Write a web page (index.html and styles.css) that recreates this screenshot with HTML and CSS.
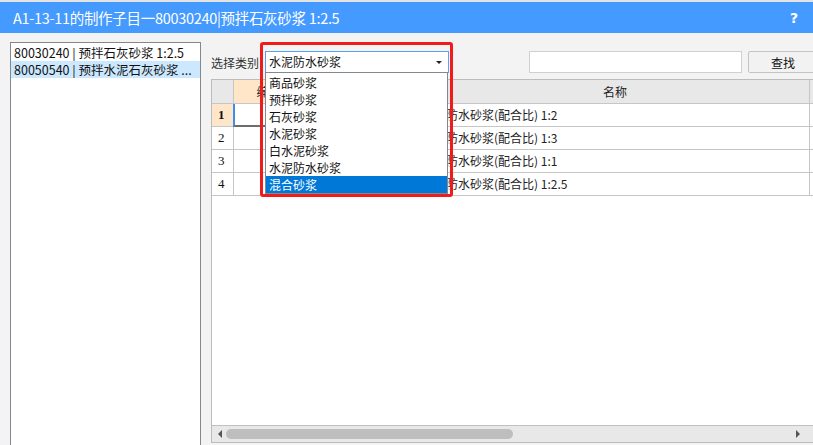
FILE: index.html
```html
<!DOCTYPE html>
<html>
<head>
  <meta charset="utf-8">
  <link rel="stylesheet" href="styles.css">
</head>
<body>
  <div class="topstrip"></div>
  <div class="titlebar">
    <span class="title">A1-13-11的制作子目一80030240|预拌石灰砂浆 1:2.5</span>
    <span class="help">?</span>
  </div>

  <div class="main">
    <div class="list">
      <div class="list-item">80030240 | 预拌石灰砂浆 1:2.5</div>
      <div class="list-item selected">80050540 | 预拌水泥石灰砂浆 ...</div>
    </div>

    <div class="panel">
      <div class="toolbar">
        <span class="label">选择类别</span>
        <div class="combo-wrap">
          <div class="combo">水泥防水砂浆<span class="arrow"></span></div>
          <div class="dropdown">
            <div class="dd-item">商品砂浆</div>
            <div class="dd-item">预拌砂浆</div>
            <div class="dd-item">石灰砂浆</div>
            <div class="dd-item">水泥砂浆</div>
            <div class="dd-item">白水泥砂浆</div>
            <div class="dd-item">水泥防水砂浆</div>
            <div class="dd-item active">混合砂浆</div>
          </div>
          <div class="highlight"></div>
        </div>
        <input class="search" type="text">
        <button class="btn">查找</button>
      </div>

      <div class="grid">
        <div class="grid-row head">
          <div class="cell rowhead"></div>
          <div class="cell current-col">编号</div>
          <div class="cell">项目编码</div>
          <div class="cell">名称</div>
          <div class="cell"></div>
        </div>
        <div class="grid-row">
          <div class="cell rowhead current-row">1</div>
          <div class="cell current-cell"></div>
          <div class="cell"></div>
          <div class="cell name">水泥防水砂浆(配合比) 1:2</div>
          <div class="cell"></div>
        </div>
        <div class="grid-row">
          <div class="cell rowhead">2</div>
          <div class="cell"></div>
          <div class="cell"></div>
          <div class="cell name">水泥防水砂浆(配合比) 1:3</div>
          <div class="cell"></div>
        </div>
        <div class="grid-row">
          <div class="cell rowhead">3</div>
          <div class="cell"></div>
          <div class="cell"></div>
          <div class="cell name">水泥防水砂浆(配合比) 1:1</div>
          <div class="cell"></div>
        </div>
        <div class="grid-row">
          <div class="cell rowhead">4</div>
          <div class="cell"></div>
          <div class="cell"></div>
          <div class="cell name">水泥防水砂浆(配合比) 1:2.5</div>
          <div class="cell"></div>
        </div>
        <div class="grid-body"></div>
        <div class="hscroll">
          <span class="arr-left"></span>
          <span class="thumb"></span>
          <span class="arr-right"></span>
        </div>
      </div>
    </div>
  </div>
</body>
</html>
```

FILE: styles.css
```css
body {
  margin: 0;
  width: 813px;
  height: 445px;
  overflow: hidden;
  background: #f3f3f3;
  font-family: "Noto Sans CJK SC", "Noto Sans", sans-serif;
  font-size: 12px;
  color: #111;
}

.topstrip {
  height: 2px;
  background: #e4e4e4;
}

.titlebar {
  height: 31px;
  background: #449aff;
  color: white;
  display: flex;
  align-items: center;
  justify-content: space-between;
  padding: 0 15px 0 13px;
}

.title {
  font-size: 14.5px;
  letter-spacing: -0.3px;
}

.help {
  font-family: "DejaVu Sans", sans-serif;
  font-size: 14px;
  font-weight: bold;
}

.main {
  display: flex;
  padding: 9px 0 0 10px;
}

/* left list */
.list {
  width: 191px;
  height: 420px;
  box-sizing: border-box;
  flex-shrink: 0;
  background: white;
  border: 1px solid #828790;
  padding-top: 1px;
}

.list-item {
  height: 17px;
  line-height: 17px;
  padding-left: 3px;
  font-size: 12.5px;
  white-space: nowrap;
  overflow: hidden;
}

.list-item.selected {
  background: #cce8ff;
}

/* right panel */
.panel {
  margin-left: 10px;
  width: 610px;
  flex-shrink: 0;
}

.toolbar {
  display: flex;
  align-items: center;
  height: 22px;
  margin-top: 9px;
}

.label {
  width: 54px;
  flex-shrink: 0;
  color: #333;
}

.combo-wrap {
  position: relative;
  width: 184px;
  height: 22px;
  flex-shrink: 0;
}

.combo {
  height: 22px;
  box-sizing: border-box;
  border: 1px solid #5a9ff0;
  background: white;
  padding-left: 3px;
  line-height: 20px;
  position: relative;
}

.arrow {
  position: absolute;
  right: 6px;
  top: 9px;
  border-left: 3px solid transparent;
  border-right: 3px solid transparent;
  border-top: 3px solid #222;
}

.dropdown {
  position: absolute;
  left: 0;
  top: 21px;
  width: 183px;
  box-sizing: border-box;
  background: white;
  border: 1px solid #828790;
  padding-top: 1px;
  z-index: 2;
}

.dd-item {
  height: 17px;
  line-height: 17px;
  padding-left: 3px;
}

.dd-item.active {
  background: #0078d7;
  color: white;
}

.highlight {
  position: absolute;
  left: -5px;
  top: -9px;
  width: 193px;
  height: 155px;
  box-sizing: border-box;
  border: 3px solid #f01c1c;
  border-radius: 3px;
  z-index: 3;
}

.search {
  margin-left: 80px;
  width: 213px;
  height: 22px;
  box-sizing: border-box;
  border: 1px solid #d0d0d0;
  background: white;
  padding: 0;
  flex-shrink: 0;
}

.btn {
  margin-left: 6px;
  width: 70px;
  height: 22px;
  flex-shrink: 0;
  box-sizing: border-box;
  border: 1px solid #c4c4c4;
  border-radius: 2px;
  background: #f2f2f2;
  font-family: "Noto Sans CJK SC", sans-serif;
  font-size: 12px;
  color: #111;
  padding: 0;
}

/* data grid */
.grid {
  margin-top: 6px;
  height: 364px;
  box-sizing: border-box;
  border: 1px solid #bcbcbc;
  background: white;
  display: flex;
  flex-direction: column;
}

.grid-row {
  display: grid;
  grid-template-columns: 22px 70px 117px 389px 1fr;
  height: 23px;
  flex-shrink: 0;
}

.grid-row.head {
  height: 24px;
  background: #e8e8e8;
}

.cell {
  box-sizing: border-box;
  border-right: 1px solid #c6c6c6;
  border-bottom: 1px solid #c6c6c6;
  line-height: 22px;
  white-space: nowrap;
  overflow: hidden;
}

.head .cell {
  text-align: center;
  line-height: 23px;
  color: #222;
}

.head .current-col {
  background: #ffe6c8;
}

.rowhead {
  font-family: "Liberation Serif", serif;
  font-size: 13px;
  padding-left: 6px;
}

.rowhead.current-row {
  background: #ffe6c8;
  font-weight: bold;
}

.current-cell {
  border-left: 2px solid #3b8ff0;
  border-bottom: 2px solid #6d6d6d;
  margin-left: -1px;
}

.name {
  padding-left: 1px;
  color: #222;
}

.grid-body {
  flex: 1;
}

.hscroll {
  height: 16px;
  border-top: 1px solid #c0c0c0;
  background: #e8e8e8;
  position: relative;
  display: flex;
  align-items: center;
}

.arr-left {
  margin-left: 6px;
  border-top: 4px solid transparent;
  border-bottom: 4px solid transparent;
  border-right: 4px solid #555;
}

.thumb {
  margin-left: 4px;
  width: 287px;
  height: 10px;
  border-radius: 5px;
  background: #bebebe;
}

.arr-right {
  margin-left: 283px;
  border-top: 4px solid transparent;
  border-bottom: 4px solid transparent;
  border-left: 4px solid #555;
}
```
